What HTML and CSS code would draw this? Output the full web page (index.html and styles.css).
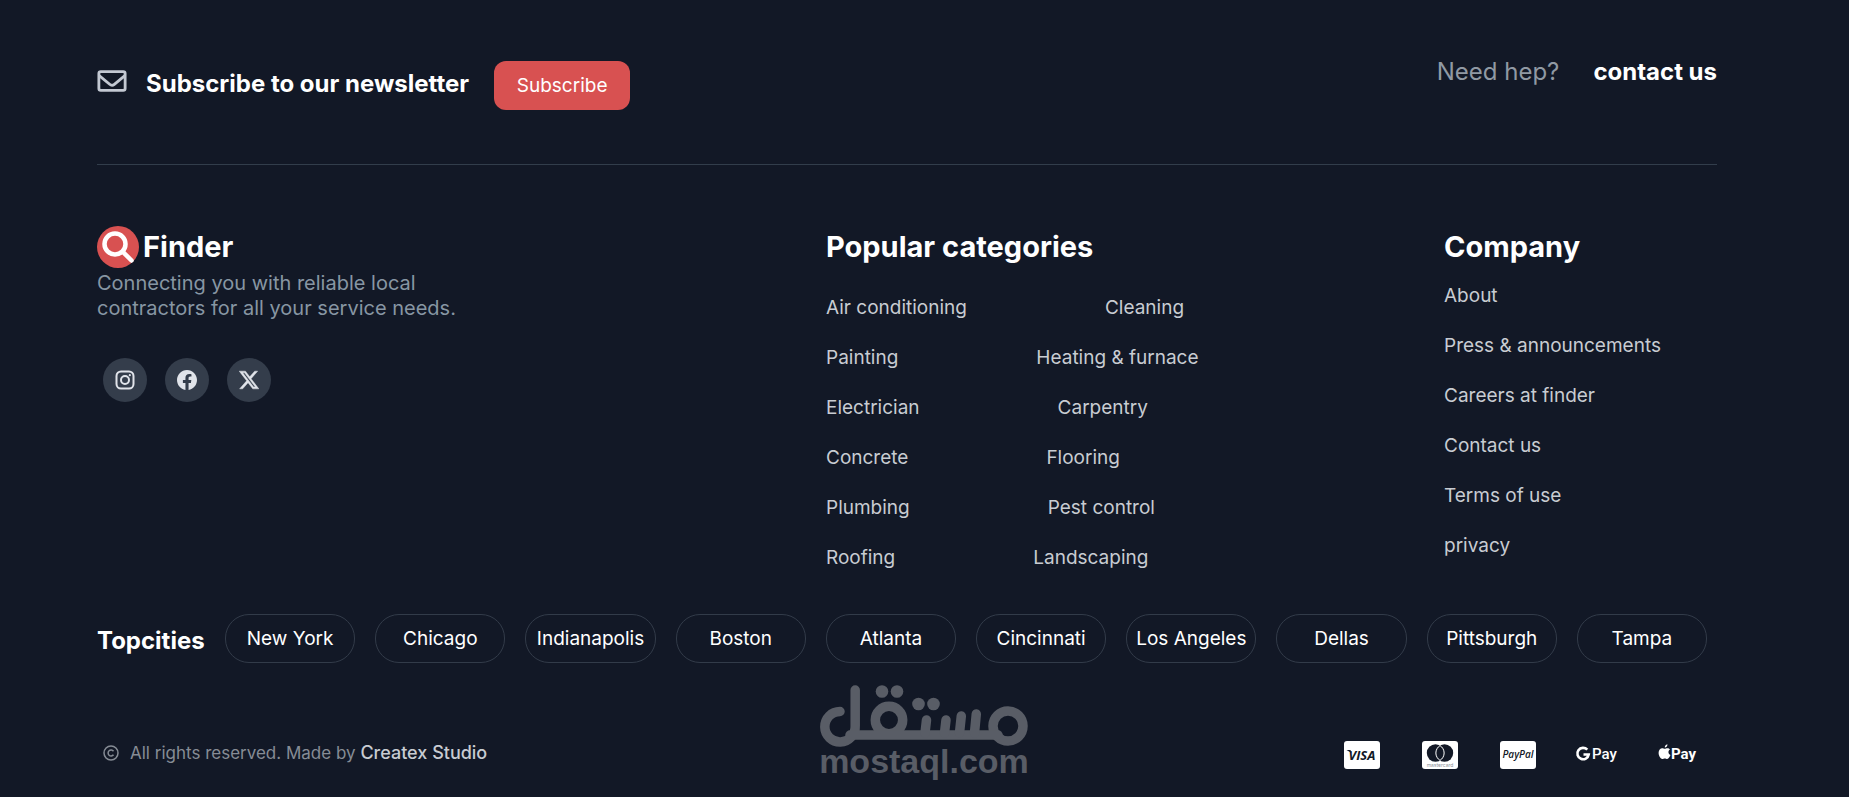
FILE: index.html
```html
<!DOCTYPE html>
<html lang="en">

<head>
    <meta charset="UTF-8">
    <meta name="viewport" content="width=device-width, initial-scale=1.0">
    <title>Finder</title>
    <link rel="stylesheet" href="styles.css">
</head>

<body>
    <footer class="footer">
        <div class="newsletter">
            <svg class="mail" viewBox="0 0 32 24" fill="none" stroke="currentColor" stroke-width="3">
                <rect x="2" y="2" width="28" height="20" rx="2" />
                <path d="M2 6l11.500 9.500q2.500 2 5 0L30 6" />
            </svg>
            <h2 class="newsTitle">Subscribe to our newsletter</h2>
            <button type="button" class="subscribe">Subscribe</button>
            <p class="help">
                <span>Need hep?</span>
                <a href="#" class="contact">contact us</a>
            </p>
        </div>

        <div class="columns">
            <div class="brand">
                <div class="logo">
                    <svg class="logoIcon" viewBox="0 0 42 42" fill="none">
                        <circle cx="21" cy="21" r="21" fill="#d85151" />
                        <circle cx="18" cy="18" r="10.500" stroke="#fff" stroke-width="4.500" />
                        <path d="M26 26l8.500 8.500" stroke="#fff" stroke-width="4.500" stroke-linecap="round" />
                    </svg>
                    <h2 class="title">Finder</h2>
                </div>
                <p class="about">Connecting you with reliable local<br>contractors for all your service needs.</p>
                <div class="social">
                    <a href="#" class="socialLink" aria-label="Instagram">
                        <svg viewBox="0 0 20 20" fill="none" stroke="currentColor" stroke-width="2">
                            <rect x="1.500" y="1.500" width="17" height="17" rx="4.500" />
                            <circle cx="10" cy="10" r="4" />
                            <circle cx="14.800" cy="5.200" r="1.100" fill="currentColor" stroke="none" />
                        </svg>
                    </a>
                    <a href="#" class="socialLink" aria-label="Facebook">
                        <svg viewBox="0 0 24 24" fill="currentColor">
                            <path d="M24 12.073C24 5.405 18.627 0 12 0S0 5.405 0 12.073C0 18.100 4.388 23.094 10.125 24v-8.437H7.078v-3.490h3.047V9.413c0-3.026 1.792-4.697 4.533-4.697 1.312 0 2.686.236 2.686.236v2.971h-1.513c-1.491 0-1.956.930-1.956 1.886v2.264h3.328l-.532 3.490h-2.796V24C19.612 23.094 24 18.100 24 12.073z" />
                        </svg>
                    </a>
                    <a href="#" class="socialLink" aria-label="X">
                        <svg viewBox="1 1 22 22" fill="currentColor" stroke="currentColor" stroke-width=".5">
                            <path d="M18.244 2.250h3.308l-7.227 8.260 8.502 11.240H16.170l-5.214-6.817L4.990 21.750H1.680l7.730-8.835L1.254 2.250H8.080l4.713 6.231zm-1.161 17.520h1.833L7.084 4.126H5.117z" />
                        </svg>
                    </a>
                </div>
            </div>

            <div class="categories">
                <h2 class="title">Popular categories</h2>
                <ul class="list">
                    <li><a href="#">Air conditioning</a><a href="#">Cleaning</a></li>
                    <li><a href="#">Painting</a><a href="#">Heating &amp; furnace</a></li>
                    <li><a href="#">Electrician</a><a href="#">Carpentry</a></li>
                    <li><a href="#">Concrete</a><a href="#">Flooring</a></li>
                    <li><a href="#">Plumbing</a><a href="#">Pest control</a></li>
                    <li><a href="#">Roofing</a><a href="#">Landscaping</a></li>
                </ul>
            </div>

            <div class="company">
                <h2 class="title">Company</h2>
                <ul class="list">
                    <li><a href="#">About</a></li>
                    <li><a href="#">Press &amp; announcements</a></li>
                    <li><a href="#">Careers at finder</a></li>
                    <li><a href="#">Contact us</a></li>
                    <li><a href="#">Terms of use</a></li>
                    <li><a href="#">privacy</a></li>
                </ul>
            </div>
        </div>

        <div class="cities">
            <h2 class="citiesTitle">Topcities</h2>
            <button type="button" class="city">New York</button>
            <button type="button" class="city">Chicago</button>
            <button type="button" class="city">Indianapolis</button>
            <button type="button" class="city">Boston</button>
            <button type="button" class="city">Atlanta</button>
            <button type="button" class="city">Cincinnati</button>
            <button type="button" class="city">Los Angeles</button>
            <button type="button" class="city">Dellas</button>
            <button type="button" class="city">Pittsburgh</button>
            <button type="button" class="city">Tampa</button>
        </div>

        <div class="bottom">
            <p class="copy">
                <svg class="copyIcon" viewBox="0 0 16 16" fill="none" stroke="currentColor" stroke-width="1.500">
                    <circle cx="8" cy="8" r="7" />
                    <path d="M10.500 6.200a3 3 0 1 0 0 3.600" />
                </svg>
                <span>All rights reserved. Made by <a href="#" class="studio">Createx Studio</a></span>
            </p>

            <div class="payments">
                <svg class="pay" viewBox="0 0 40 30">
                    <rect x="2" y="1" width="36" height="28" rx="3" fill="#fff" />
                    <path d="M4.500 10h4l1 3z" fill="#121826" />
                    <text x="20" y="20" class="visa" text-anchor="middle">VISA</text>
                </svg>
                <svg class="pay" viewBox="0 0 40 30">
                    <rect x="2" y="1" width="36" height="28" rx="3" fill="#fff" />
                    <circle cx="15.500" cy="13" r="8.700" fill="#121826" />
                    <circle cx="24.500" cy="13" r="8.700" fill="#121826" />
                    <path d="M20 5.600a8.700 8.700 0 0 1 0 14.800a8.700 8.700 0 0 1 0-14.800z" fill="#121826" stroke="#fff" />
                    <text x="20" y="27" class="master" text-anchor="middle">mastercard</text>
                </svg>
                <svg class="pay" viewBox="0 0 40 30">
                    <rect x="2" y="1" width="36" height="28" rx="3" fill="#fff" />
                    <text x="20" y="18" class="paypal" text-anchor="middle">PayPal</text>
                </svg>
                <svg class="pay" viewBox="0 0 40 30">
                    <path d="M11.300 9.700A5.700 5.700 0 1 0 12.700 14.500H7.500" fill="none" stroke="#fff" stroke-width="2.600" />
                    <text x="16" y="19" class="gpay">Pay</text>
                </svg>
                <svg class="pay" viewBox="0 0 40 30">
                    <path d="M10.800 7.500c-.2-1.500 1-3 2.600-3.300.2 1.700-1 3.200-2.600 3.300zM8.300 8.200c1 0 1.500.600 2.400.600s1.500-.6 2.700-.6c1 0 2 .5 2.600 1.400-2.300 1.400-1.900 4.600.500 5.500-.7 1.700-1.900 3.900-3.300 3.900-.9 0-1.300-.6-2.400-.6s-1.500.600-2.400.600C6.500 19 4.600 15.900 4.600 12.800c0-2.900 1.700-4.600 3.700-4.600z" fill="#fff" />
                    <text x="17" y="19" class="applepay">Pay</text>
                </svg>
            </div>
        </div>

        <!-- watermark, centred over the page -->
        <svg class="mostaql" viewBox="0 0 208 97" role="img" aria-label="mostaql">
            <g fill="none" stroke="currentColor" stroke-width="9.500" stroke-linecap="round">
                <path d="M20 26.500A15.200 15.200 0 1 0 35.200 41V5" />
                <circle cx="69" cy="35" r="13.700" />
                <circle cx="188" cy="41" r="15" />
                <path d="M30 50H178" />
                <path d="M105 48l1.500-13M124.500 48l1.500-13M139.500 48l1.800-17M154.500 48l1.800-19" />
            </g>
            <g fill="currentColor">
                <circle cx="62" cy="6.500" r="6.300" />
                <circle cx="77" cy="6.500" r="6.300" />
                <circle cx="98.500" cy="19" r="6.300" />
                <circle cx="113.500" cy="19" r="6.300" />
                <text class="mostaqlText" x="104" y="88" text-anchor="middle">mostaql.com</text>
            </g>
        </svg>
    </footer>
</body>

</html>
```
FILE: styles.css
```css
* {
    box-sizing: border-box;
}

body {
    margin: 0;
    background: #121826;
    color: #fff;
    font-family: Inter, "Liberation Sans", sans-serif;
    font-size: 19px;
    line-height: 30px;
}

h2,
p,
ul {
    margin: 0;
    padding: 0;
}

a {
    color: inherit;
    text-decoration: none;
}

button {
    font: inherit;
    color: #fff;
    cursor: pointer;
}

.footer {
    position: relative;
    padding: 61px 132px 16px 97px;
}

.newsletter {
    display: flex;
    align-items: flex-start;
    padding-bottom: 54px;
    border-bottom: 1px solid #323d4b;
}

.mail {
    width: 30px;
    height: 24px;
    margin: 8px 19px 0 0;
    color: #c3c8d2;
}

.newsTitle,
.citiesTitle {
    font-size: 24px;
    font-weight: 700;
}

.newsTitle {
    margin: 8px 25px 0 0;
}

.subscribe {
    width: 136px;
    height: 49px;
    border: none;
    border-radius: 12px;
    background: #d85151;
}

.help {
    display: flex;
    gap: 34px;
    margin: -4px 0 0 auto;
    color: #9099a3;
    font-size: 24px;
}

.contact {
    color: #fff;
    font-weight: 700;
}

.columns {
    display: grid;
    grid-template-columns: 729fr 618fr 273fr;
    padding-top: 61px;
}

.logo {
    display: flex;
    align-items: center;
    gap: 4px;
}

.logoIcon {
    width: 42px;
    height: 42px;
}

.title {
    font-size: 29px;
    font-weight: 700;
    line-height: 42px;
}

.about {
    padding-top: 3px;
    color: #8796a3;
    font-size: 20px;
    line-height: 25px;
}

.social {
    display: flex;
    gap: 18px;
    padding: 37px 0 0 6px;
}

.socialLink {
    display: flex;
    align-items: center;
    justify-content: center;
    width: 44px;
    height: 44px;
    border-radius: 50%;
    background: #343d4b;
    color: #e1e4ea;
}

.socialLink svg {
    width: 20px;
    height: 20px;
}

.list {
    display: flex;
    flex-direction: column;
    gap: 20px;
    list-style: none;
    color: #c8ccd2;
}

.categories .list {
    padding-top: 25px;
}

.company .list {
    padding-top: 13px;
}

.categories li {
    display: flex;
    gap: 138px;
}

.cities {
    display: flex;
    align-items: center;
    gap: 20px;
    padding: 41px 10px 0 0;
}

.citiesTitle {
    flex: 0 0 108px;
    padding-top: 5px;
}

.city {
    flex: 1 1 0;
    height: 49px;
    padding: 0;
    border: 1px solid #323b49;
    border-radius: 24px;
    background: none;
    white-space: nowrap;
}

.bottom {
    display: flex;
    align-items: center;
    justify-content: space-between;
    padding-top: 73px;
}

.copy {
    display: flex;
    align-items: center;
    gap: 11px;
    padding-left: 6px;
    color: #868c95;
    font-size: 17px;
}

.copyIcon {
    width: 16px;
    height: 16px;
}

.studio {
    color: #c8ccd2;
    font-size: 18px;
    font-weight: 500;
}

.mostaql {
    position: absolute;
    left: 50%;
    bottom: 4px;
    width: 208px;
    height: 97px;
    margin-left: -105px;
    overflow: visible;
    color: #595d66;
}

.mostaqlText {
    font-family: "Liberation Sans", Arial, sans-serif;
    font-size: 34px;
    font-weight: 700;
}

.payments {
    display: flex;
    gap: 38px;
    padding: 4px 23px 0 0;
}

.pay {
    width: 40px;
    height: 30px;
    overflow: visible;
    fill: #fff;
}

.visa,
.paypal {
    fill: #121826;
    font-family: "Open Sans", sans-serif;
    font-weight: 700;
    font-style: italic;
}

.visa {
    font-size: 13px;
}

.paypal {
    font-size: 10px;
    font-weight: 600;
}

.master {
    fill: #8a8f99;
    font-size: 5px;
}

.gpay,
.applepay {
    font-family: Roboto, sans-serif;
    font-size: 15px;
    font-weight: 500;
}

.applepay {
    font-weight: 700;
}
```
